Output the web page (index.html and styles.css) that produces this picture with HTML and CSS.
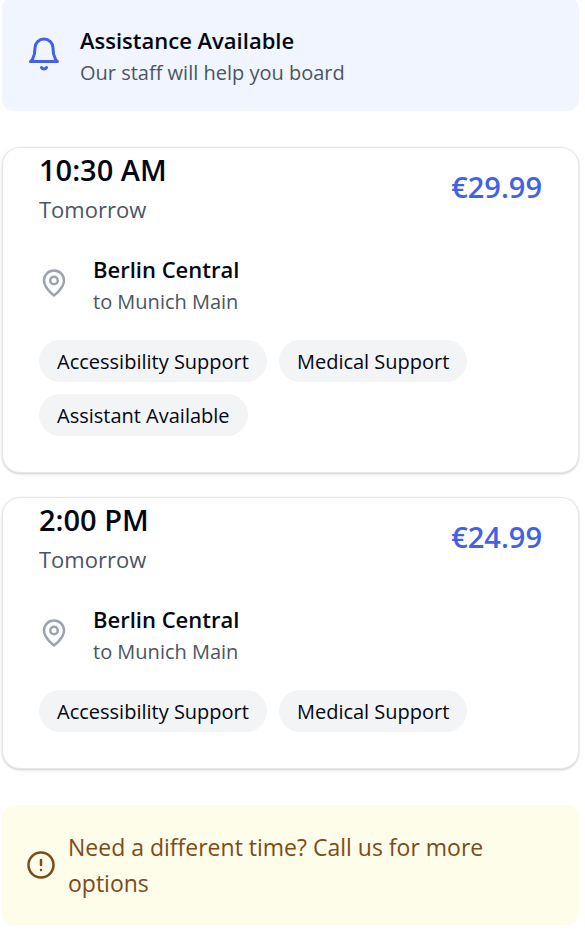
FILE: index.html
```html
<!DOCTYPE html>
<html lang="en">
<head>
<meta charset="utf-8">
<meta name="viewport" content="width=device-width, initial-scale=1">
<title>Departures</title>
<link rel="stylesheet" href="styles.css">
</head>
<body>
<main class="page">
  <section class="assist">
    <svg class="icon icon-bell" viewBox="0 0 24 24" aria-hidden="true"><path d="M6 8a6 6 0 0 1 12 0c0 7 3 9 3 9H3s3-2 3-9"/><path d="M10.3 21a1.94 1.94 0 0 0 3.4 0"/></svg>
    <div>
      <h2 class="title">Assistance Available</h2>
      <p class="detail">Our staff will help you board</p>
    </div>
  </section>

  <div class="trips">
    <article class="trip">
      <header class="trip-head">
        <div>
          <h3 class="time">10:30 AM</h3>
          <p class="day">Tomorrow</p>
        </div>
        <p class="price">€29.99</p>
      </header>
      <div class="route">
        <svg class="icon icon-pin" viewBox="0 0 24 24" aria-hidden="true"><path d="M20 10c0 6-8 12-8 12s-8-6-8-12a8 8 0 0 1 16 0Z"/><circle cx="12" cy="10" r="3"/></svg>
        <div>
          <p class="title">Berlin Central</p>
          <p class="detail">to Munich Main</p>
        </div>
      </div>
      <ul class="tags">
        <li class="tag">Accessibility Support</li>
        <li class="tag">Medical Support</li>
        <li class="tag">Assistant Available</li>
      </ul>
    </article>

    <article class="trip">
      <header class="trip-head">
        <div>
          <h3 class="time">2:00 PM</h3>
          <p class="day">Tomorrow</p>
        </div>
        <p class="price">€24.99</p>
      </header>
      <div class="route">
        <svg class="icon icon-pin" viewBox="0 0 24 24" aria-hidden="true"><path d="M20 10c0 6-8 12-8 12s-8-6-8-12a8 8 0 0 1 16 0Z"/><circle cx="12" cy="10" r="3"/></svg>
        <div>
          <p class="title">Berlin Central</p>
          <p class="detail">to Munich Main</p>
        </div>
      </div>
      <ul class="tags">
        <li class="tag">Accessibility Support</li>
        <li class="tag">Medical Support</li>
      </ul>
    </article>
  </div>

  <section class="help">
    <svg class="icon icon-alert" viewBox="0 0 24 24" aria-hidden="true"><circle cx="12" cy="12" r="10"/><path d="M12 8v4M12 16h.01"/></svg>
    <p>Need a different time? Call us for more options</p>
  </section>
</main>
</body>
</html>
```
FILE: styles.css
```css
* {
  box-sizing: border-box;
  margin: 0;
  padding: 0;
}

body {
  background: #fff;
  color: #030712;
  font-family: "Segoe UI", "Open Sans", "Noto Sans", sans-serif;
  font-size: 23px;
  line-height: 36px;
}

.page {
  display: flex;
  flex-direction: column;
  gap: 36px;
  margin: -3px 6px 6px 2px;
}

.icon {
  flex: none;
  fill: none;
  stroke: currentColor;
  stroke-width: 2;
  stroke-linecap: round;
  stroke-linejoin: round;
}

.icon-bell {
  width: 36px;
  height: 36px;
  color: #4361e6;
}

.icon-pin {
  width: 30px;
  height: 30px;
  color: #9ca3af;
}

.icon-alert {
  width: 30px;
  height: 30px;
}

.assist {
  display: flex;
  align-items: center;
  gap: 18px;
  padding: 24px;
  border-radius: 12px;
  background: #f0f5ff;
}

.title {
  font-size: 22px;
  font-weight: 600;
  line-height: 38px;
}

.detail {
  color: #4b5563;
  font-size: 20px;
  line-height: 28px;
}

.trips {
  display: flex;
  flex-direction: column;
  gap: 24px;
}

.trip {
  display: flex;
  flex-direction: column;
  gap: 24px;
  padding: 0 36px 36px;
  border: 1px solid #e5e7eb;
  border-radius: 18px;
  background: #fff;
  box-shadow: 0 1px 3px rgb(0 0 0 / 0.12), 0 1px 2px rgb(0 0 0 / 0.08);
}

.trip-head {
  display: flex;
  align-items: center;
  justify-content: space-between;
}

.time,
.price {
  font-size: 29px;
  font-weight: 600;
  line-height: 44px;
}

.price {
  color: #4361e6;
}

.day {
  color: #4b5563;
  font-size: 22px;
  line-height: 34px;
}

.route {
  display: flex;
  align-items: center;
  gap: 24px;
}

.tags {
  display: flex;
  flex-wrap: wrap;
  gap: 12px;
  list-style: none;
}

.tag {
  padding: 7px 18px 5px;
  border-radius: 21px;
  background: #f3f4f6;
  font-size: 20px;
  line-height: 30px;
}

.help {
  display: flex;
  align-items: center;
  gap: 12px;
  padding: 24px;
  border-radius: 12px;
  background: #fdfdea;
  color: #7d4b18;
}
```
